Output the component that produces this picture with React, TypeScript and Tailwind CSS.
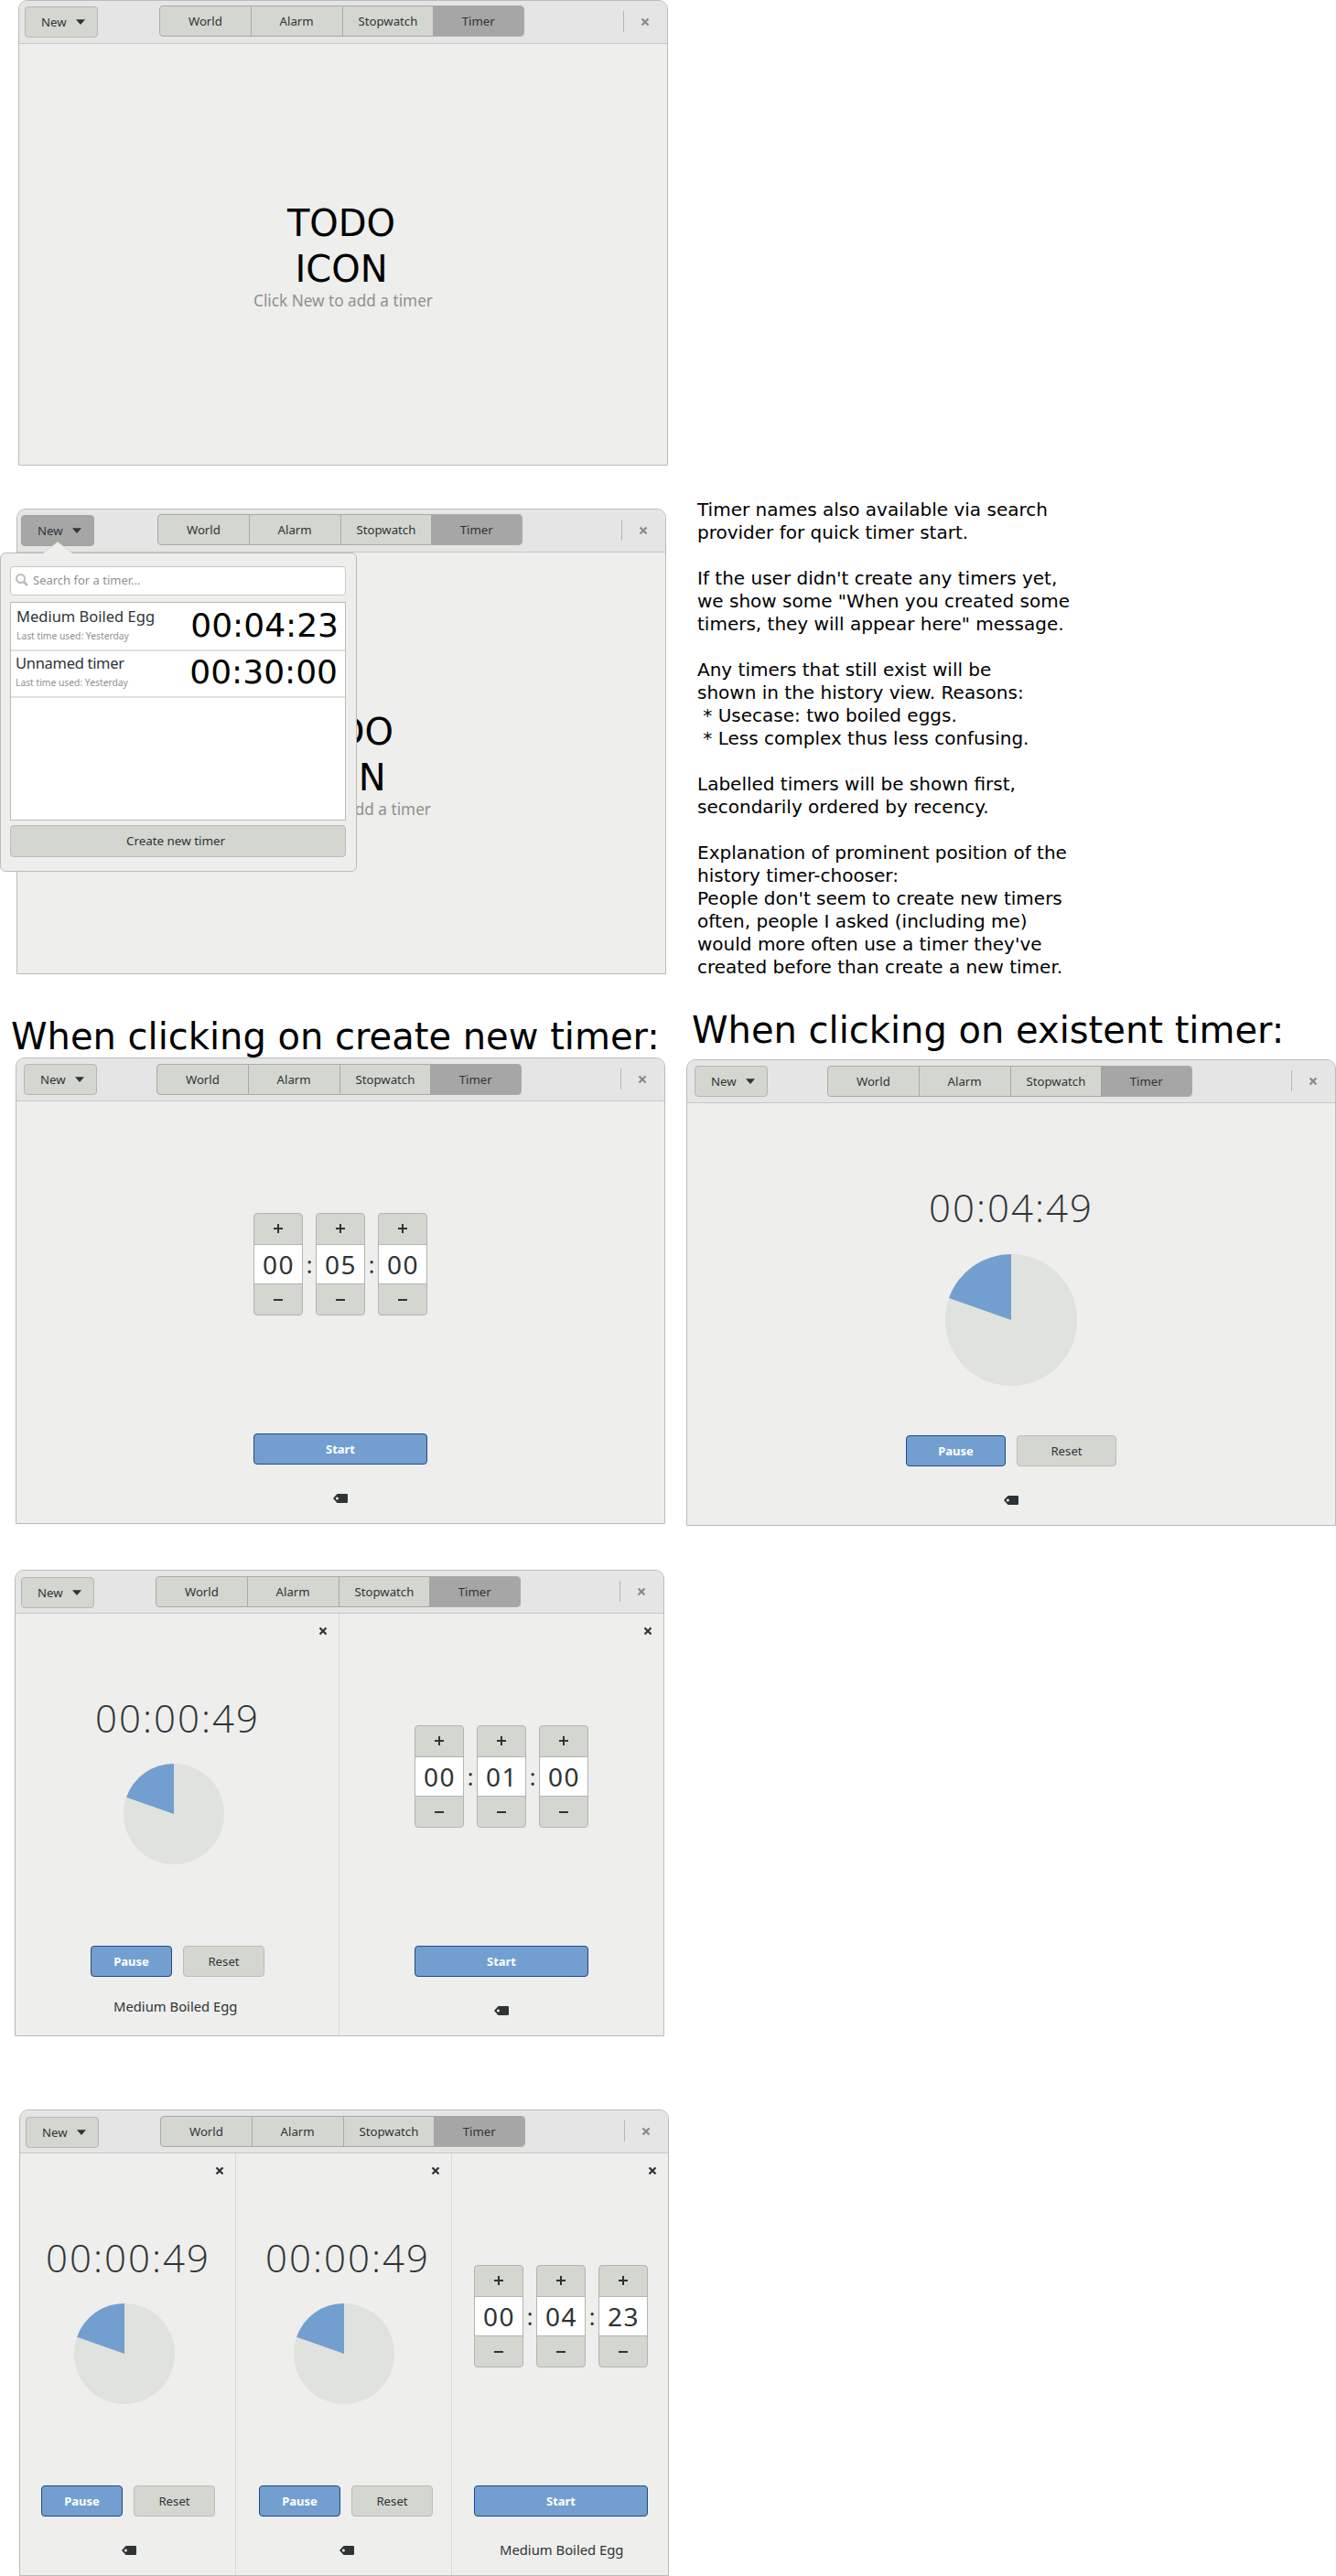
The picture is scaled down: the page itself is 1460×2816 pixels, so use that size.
import React from "react";

const tabs = ["World", "Alarm", "Stopwatch", "Timer"];

function Cross({ className }: { className: string }) {
  return (
    <svg viewBox="0 0 10 10" className={className}>
      <path d="M1.5 1.5 L8.5 8.5 M8.5 1.5 L1.5 8.5" stroke="currentColor" strokeWidth="2.2" fill="none" />
    </svg>
  );
}

function Header({ newClass = "ml-[6px] mt-[7px]", newActive = false, tabsClass }: { newClass?: string; newActive?: boolean; tabsClass: string }) {
  return (
    <div className="flex h-[47px] items-start rounded-t-[10px] border-b border-[#c6c8c2] bg-[#e5e5e5] text-[13.2px] leading-[32px] text-[#2e3436]">
      <div className={`${newClass} flex h-[34px] w-[80px] shrink-0 items-center rounded-[4px] border pl-[17px] ${newActive ? "border-[#a1a1a1] bg-[#a6a6a6]" : "border-[#b5b7b3] bg-[#d3d7cf]"}`}>
        <span className="w-[30px]">New</span>
        <svg viewBox="0 0 10 6" className="ml-[8px] h-[6px] w-[10px]"><path d="M0 0.3 H10 L5 6 Z" fill="#2e3436" /></svg>
      </div>
      <div className={`${tabsClass} flex h-[34px] w-[399px] shrink-0 overflow-hidden rounded-[4px] border border-[#a9aba7] bg-[#d3d7cf]`}>
        {tabs.map((t, i) => (
          <div key={t} className={`flex-1 text-center ${i === 3 ? "bg-[#a6a6a6]" : i < 2 ? "border-r border-[#a9aba7]" : ""}`}>{t}</div>
        ))}
      </div>
      <div className="mr-[19px] mt-[11px] ml-auto flex h-[23px] items-center border-l border-[#b5b5b3] pl-[18px]">
        <Cross className="h-[10px] w-[10px] text-[#888a85]" />
      </div>
    </div>
  );
}

function Window({ className, header, children }: { className: string; header: React.ReactNode; children: React.ReactNode }) {
  return (
    <section className={`${className} relative w-[710px] rounded-t-[10px] border border-[#babdb6] bg-[#eeeeec] text-[#2e3436]`}>
      {header}
      {children}
    </section>
  );
}

function Empty() {
  return (
    <div className="pt-[171px] text-center">
      <p className="-ml-[4px] font-['DejaVu_Sans'] text-[40px] leading-[50px] text-black">TODO<br />ICON</p>
      <p className="-mt-[2px] text-[17.2px] leading-[24px] text-[#8f918e]">Click New to add a timer</p>
    </div>
  );
}

function Picker({ className, values }: { className: string; values: string[] }) {
  return (
    <div className={`${className} flex h-[112px] w-[190px] items-center justify-between`}>
      {values.map((v, i) => (
        <React.Fragment key={i}>
          {i > 0 && <span className="text-[25px] leading-[30px]">:</span>}
          <div className="flex h-[112px] w-[54px] flex-col overflow-hidden rounded-[4px] border border-[#b3b5b1] bg-[#d3d7cf]">
            <div className="flex h-[34px] items-center justify-center border-b border-[#b3b5b1]">
              <svg viewBox="0 0 10 10" className="h-[10px] w-[10px]"><path d="M5 0V10M0 5H10" stroke="#2e3436" strokeWidth="2" /></svg>
            </div>
            <div className="h-[43px] bg-white pl-[1px] text-center text-[28px] leading-[42px] tracking-[1.5px]">{v}</div>
            <div className="flex h-[34px] items-center justify-center border-t border-[#b3b5b1]">
              <svg viewBox="0 0 10 10" className="h-[10px] w-[10px]"><path d="M0 5H10" stroke="#2e3436" strokeWidth="2" /></svg>
            </div>
          </div>
        </React.Fragment>
      ))}
    </div>
  );
}

function Pie({ className }: { className: string }) {
  return (
    <svg viewBox="-50 -50 100 100" className={className}>
      <circle r="50" fill="#e0e2dd" />
      <path d="M0 0 V-50 A50 50 0 0 0 -47.2 -16.6 Z" fill="#729fcf" />
    </svg>
  );
}

function Tag({ className }: { className: string }) {
  return (
    <svg viewBox="0 0 16 10" className={`${className} h-[10px] w-[16px]`}>
      <path fillRule="evenodd" d="M0 5L4 .6Q4.500 0 5.300 0H15Q16 0 16 1V9Q16 10 15 10H5.300Q4.500 10 4 9.400ZM4.400 3.500A1.500 1.500 0 1 0 4.400 6.500A1.500 1.500 0 1 0 4.400 3.500Z" fill="#2e3436" />
    </svg>
  );
}

function Primary({ className, children }: { className: string; children: string }) {
  return <button className={`${className} h-[34px] rounded-[4px] border border-[#204a87] bg-[#729fcf] text-[13px] font-bold leading-[32px] text-white`}>{children}</button>;
}

function Reset({ className }: { className: string }) {
  return <button className={`${className} h-[34px] rounded-[4px] border border-[#babdb6] bg-[#d3d7cf] text-[13.2px] leading-[32px]`}>Reset</button>;
}

function Digits({ className, children }: { className: string; children: string }) {
  return <div className={`${className} font-['Open_Sans'] text-[42px] font-light leading-[50px] tracking-[2px] whitespace-nowrap`}>{children}</div>;
}

function HistoryRow({ className, nameClass, name, time }: { className: string; nameClass: string; name: string; time: string }) {
  return (
    <div className={`${className} flex justify-between border-b-2 border-[#dfe1dc]`}>
      <div>
        <p className={`${nameClass} pt-[3px] text-[16.500px] leading-[24px]`}>{name}</p>
        <p className="mt-[1px] text-[10.3px] leading-[16px] text-[#8f918e]">Last time used: Yesterday</p>
      </div>
      <p className="font-['DejaVu_Sans'] text-[36px] leading-[50px] text-black">{time}</p>
    </div>
  );
}

const notes = `Timer names also available via search
provider for quick timer start.

If the user didn't create any timers yet,
we show some "When you created some
timers, they will appear here" message.

Any timers that still exist will be
shown in the history view. Reasons:
 * Usecase: two boiled eggs.
 * Less complex thus less confusing.

Labelled timers will be shown first,
secondarily ordered by recency.

Explanation of prominent position of the
history timer-chooser:
People don't seem to create new timers
often, people I asked (including me)
would more often use a timer they've
created before than create a new timer.`;

export default function App() {
  return (
    <main className="flex h-[2816px] w-[1460px] overflow-hidden bg-white font-['Noto_Sans']">
      <div className="w-[740px] shrink-0">
        <Window className="ml-[20px] h-[509px]" header={<Header newClass="ml-[6px] mt-[6px]" tabsClass="ml-[67px] mt-[5px]" />}>
          <Empty />
        </Window>

        <Window className="mt-[47px] ml-[18px] h-[509px]" header={<Header newClass="ml-[4px] mt-[6px]" newActive tabsClass="ml-[69px] mt-[5px]" />}>
          <Empty />
          <div className="absolute top-[47px] -left-[19px] h-[349px] w-[390px] rounded-[6px] border border-[#babdb6] bg-[#eeeeec] pt-[14px] pr-[11px] pl-[10px]">
            <svg viewBox="0 0 32 14" className="absolute -top-[13px] left-[46px] h-[14px] w-[32px]">
              <path d="M0 13L16 0.500L32 13V14H0Z" fill="#eeeeec" />
              <path d="M0 12.500L16 0.500L32 12.500" fill="none" stroke="#d3d7cf" />
            </svg>
            <div className="flex h-[32px] items-center rounded-[4px] border border-[#c6c9c2] bg-white pl-[5px] text-[13px] text-[#8f918e]">
              <svg viewBox="0 0 14 14" className="-mt-[2px] h-[14px] w-[14px]"><circle cx="5.500" cy="5.500" r="4.500" fill="none" stroke="#babdb6" strokeWidth="2" /><path d="M8.500 8.500L13 13" stroke="#babdb6" strokeWidth="2.500" /></svg>
              <span className="ml-[5px]">Search for a timer...</span>
            </div>
            <div className="mt-[7px] h-[239px] border border-[#babdb6] bg-white">
              <HistoryRow className="h-[53px] pr-[7px] pl-[6px]" nameClass="" name="Medium Boiled Egg" time="00:04:23" />
              <HistoryRow className="-mt-[2px] h-[53px] pr-[8px] pl-[5px]" nameClass="tracking-[-0.3px]" name="Unnamed timer" time="00:30:00" />
            </div>
            <div className="mt-[5px] h-[35px] rounded-[4px] border border-[#babdb6] bg-[#d3d7cf] pr-[5px] text-center text-[13.4px] leading-[32px]">Create new timer</div>
          </div>
        </Window>

        <h2 className="mt-[41px] ml-[12px] h-[50px] font-['DejaVu_Sans'] text-[40px] leading-[54px] whitespace-nowrap text-black">When clicking on create new timer:</h2>

        <Window className="ml-[17px] h-[510px]" header={<Header newClass="ml-[8px] mt-[6px]" tabsClass="ml-[65px] mt-[6px]" />}>
          <div className="flex flex-col items-center pt-[122px]">
            <Picker className="" values={["00", "05", "00"]} />
            <Primary className="mt-[129px] w-[190px]">Start</Primary>
            <Tag className="mt-[32px]" />
          </div>
        </Window>

        <Window className="mt-[50px] ml-[16px] h-[510px]" header={<Header newClass="ml-[6px] mt-[7px]" tabsClass="ml-[67px] mt-[6px]" />}>
          <div className="grid h-[461px] grid-cols-2">
            <div className="flex flex-col border-r border-[#d9dbd6]">
              <Cross className="mt-[14px] mr-[12px] h-[10px] w-[10px] self-end" />
              <Digits className="mt-[65px] ml-[87px]">00:00:49</Digits>
              <Pie className="mt-[25px] ml-[118px] h-[110px] w-[110px]" />
              <div className="mt-[89px] ml-[82px] flex gap-[12px]"><Primary className="w-[89px]">Pause</Primary><Reset className="w-[89px]" /></div>
              <p className="mt-[20px] ml-[107px] text-[14.8px] leading-[24px]">Medium Boiled Egg</p>
            </div>
            <div className="flex flex-col">
              <Cross className="mt-[14px] mr-[12px] h-[10px] w-[10px] self-end" />
              <Picker className="mt-[98px] ml-[82px]" values={["00", "01", "00"]} />
              <Primary className="mt-[129px] ml-[82px] w-[190px]">Start</Primary>
              <Tag className="mt-[32px] ml-[169px]" />
            </div>
          </div>
        </Window>

        <Window className="mt-[80px] ml-[21px] h-[510px]" header={<Header newClass="ml-[6px] mt-[7px]" tabsClass="ml-[67px] mt-[6px]" />}>
          <div className="grid h-[461px] grid-cols-3">
            {[0, 1].map((i) => (
              <div key={i} className="flex flex-col border-r border-[#d9dbd6]">
                <Cross className="mt-[14px] mr-[12px] h-[10px] w-[10px] self-end" />
                <Digits className={i ? "mt-[65px] ml-[32px]" : "mt-[65px] ml-[28px]"}>00:00:49</Digits>
                <Pie className={`${i ? "ml-[63px]" : "ml-[59px]"} mt-[25px] h-[110px] w-[110px]`} />
                <div className={`${i ? "ml-[25px]" : "ml-[23px]"} mt-[89px] flex gap-[12px]`}><Primary className="w-[89px]">Pause</Primary><Reset className="w-[89px]" /></div>
                <Tag className={i ? "mt-[32px] ml-[113px]" : "mt-[32px] ml-[111px]"} />
              </div>
            ))}
            <div className="flex flex-col">
              <Cross className="mt-[14px] mr-[12px] h-[10px] w-[10px] self-end" />
              <Picker className="mt-[98px] ml-[24px]" values={["00", "04", "23"]} />
              <Primary className="mt-[129px] ml-[24px] w-[190px]">Start</Primary>
              <p className="mt-[24px] ml-[52px] text-[14.8px] leading-[24px]">Medium Boiled Egg</p>
            </div>
          </div>
        </Window>
      </div>

      <div className="w-[720px] shrink-0">
        <pre className="mt-[545px] ml-[22px] h-[530px] font-['DejaVu_Sans'] text-[20px] leading-[25px] text-black">{notes}</pre>
        <h2 className="mt-[24px] ml-[16px] h-[59px] font-['DejaVu_Sans'] text-[40px] leading-[54px] whitespace-nowrap text-black">When clicking on existent timer:</h2>
        <Window className="ml-[10px] h-[510px]" header={<Header newClass="ml-[8px] mt-[6px]" tabsClass="ml-[65px] mt-[6px]" />}>
          <div className="flex flex-col">
            <Digits className="mt-[89px] ml-[264px]">00:04:49</Digits>
            <Pie className="mt-[26px] ml-[282px] h-[144px] w-[144px]" />
            <div className="mt-[54px] ml-[239px] flex gap-[12px]"><Primary className="w-[109px]">Pause</Primary><Reset className="w-[109px]" /></div>
            <Tag className="mt-[32px] ml-[346px]" />
          </div>
        </Window>
      </div>
    </main>
  );
}
